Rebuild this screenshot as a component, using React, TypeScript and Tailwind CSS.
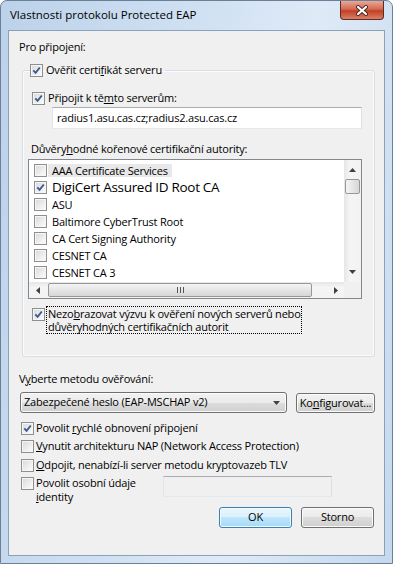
import React from 'react';

const font = "font-['Open_Sans',sans-serif]";

function Check({ checked }: { checked?: boolean }) {
  return (
    <span className="flex h-[13px] w-[13px] shrink-0 items-center justify-center border border-[#8e8f8f] bg-[linear-gradient(135deg,#d8d8d8,#fefefe)] shadow-[inset_0_0_0_1px_#f6f6f6]">
      {checked && (
        <svg width="9" height="9" viewBox="0 0 9 9">
          <path d="M1.3 4.4 L3.6 6.9 L7.8 1.5" fill="none" stroke="#3d5b8f" strokeWidth="1.9" />
        </svg>
      )}
    </span>
  );
}

function Arrow({ dir }: { dir: 'up' | 'down' | 'left' | 'right' }) {
  const paths = {
    up: 'M0 4 L3.5 0 L7 4 Z',
    down: 'M0 0 L7 0 L3.5 4 Z',
    left: 'M4 0 L4 7 L0 3.5 Z',
    right: 'M0 0 L4 3.5 L0 7 Z',
  };
  const vertical = dir === 'up' || dir === 'down';
  return (
    <svg width={vertical ? 7 : 4} height={vertical ? 4 : 7} viewBox={vertical ? '0 0 7 4' : '0 0 4 7'}>
      <path d={paths[dir]} fill="#404040" />
    </svg>
  );
}

function Button({ children, primary, className = '' }: { children: React.ReactNode; primary?: boolean; className?: string }) {
  return (
    <div
      className={`flex items-center justify-center rounded-[3px] border ${
        primary
          ? 'border-[#3c7fb1] bg-[linear-gradient(to_bottom,#eaf6fd,#d9f0fc_50%,#bee6fd_50%,#a7d9f5)] shadow-[inset_0_0_0_1px_#f0faff]'
          : 'border-[#707070] bg-[linear-gradient(to_bottom,#f2f2f2,#ebebeb_50%,#dddddd_50%,#cfcfcf)] shadow-[inset_0_0_0_1px_#fbfbfb]'
      } ${className}`}
    >
      {children}
    </div>
  );
}

const certs = [
  'AAA Certificate Services',
  'DigiCert Assured ID Root CA',
  'ASU',
  'Baltimore CyberTrust Root',
  'CA Cert Signing Authority',
  'CESNET CA',
  'CESNET CA 3',
];

function CertList() {
  return (
    <div className="ml-[5px] mt-[2px] flex h-[140px] w-[334px] flex-col border border-[#828790] bg-white">
      <div className="flex h-[122px]">
        <div className="flex-1 overflow-hidden pl-[5px] pt-[2px]">
          {certs.map((c, i) => (
            <div key={c} className="flex h-[17px] items-center gap-[1px]">
              <Check checked={i === 1} />
              <span
                className={`whitespace-nowrap px-[4px] ${
                  i === 1 ? 'text-[13.5px] leading-[17px] tracking-[-0.3px]' : 'leading-[13px]'
                } ${i === 0 ? 'bg-[#e8e8e8]' : ''}`}
              >
                {c}
              </span>
            </div>
          ))}
        </div>
        <div className="flex w-[17px] flex-col bg-[linear-gradient(to_right,#e6e6e6,#f5f5f5_35%,#f2f2f2)]">
          <div className="flex h-[17px] items-center justify-center pt-[2px]">
            <Arrow dir="up" />
          </div>
          <div className="mx-[1px] mt-[2px] h-[15px] rounded-[2px] border border-[#979797] bg-[linear-gradient(to_right,#f4f4f4,#e6e6e6_50%,#d6d6d6)]" />
          <div className="flex-1" />
          <div className="flex h-[17px] items-center justify-center pb-[3px]">
            <Arrow dir="down" />
          </div>
        </div>
      </div>
      <div className="flex h-[16px]">
        <div className="flex flex-1 items-center bg-[linear-gradient(to_bottom,#e6e6e6,#f5f5f5_35%,#f2f2f2)]">
          <div className="flex w-[17px] items-center justify-center">
            <Arrow dir="left" />
          </div>
          <div className="ml-[2px] flex h-[14px] w-[264px] items-center justify-center rounded-[2px] border border-[#979797] bg-[linear-gradient(to_bottom,#f4f4f4,#e6e6e6_50%,#d6d6d6)]">
            <svg width="7" height="6" viewBox="0 0 7 6">
              <path d="M0.5 0 V6 M3.5 0 V6 M6.5 0 V6" stroke="#555" strokeWidth="1" />
            </svg>
          </div>
          <div className="flex-1" />
          <div className="flex w-[17px] items-center justify-center">
            <Arrow dir="right" />
          </div>
        </div>
        <div className="w-[17px] bg-[#f0f0f0]" />
      </div>
    </div>
  );
}

export default function App() {
  return (
    <div
      className={`${font} flex h-[564px] w-[393px] flex-col overflow-hidden rounded-t-[7px] border border-[#6b7f97] bg-[linear-gradient(100deg,#bcd2ea_0%,#cfe0f2_40%,#dfeaf7_65%,#c4d9ee_100%)] text-[11px] tracking-[-0.2px] text-black`}
    >
      <div className="flex h-[29px] shrink-0 items-start">
        <span className="pl-[9px] pt-[6px] text-[11.5px] leading-[16px] tracking-normal">
          Vlastnosti protokolu Protected EAP
        </span>
        <div className="ml-auto mr-[8px] flex h-[19px] w-[44px] items-center justify-center rounded-b-[4px] border border-t-0 border-[#5a2c24] bg-[linear-gradient(to_bottom,#e9a897,#d46a52_45%,#c43f22_55%,#d9806a)]">
          <svg width="14" height="11" viewBox="0 0 14 11">
            <path d="M3 2 L11 9 M11 2 L3 9" stroke="#4a2520" strokeWidth="4" strokeLinecap="round" />
            <path d="M3 2 L11 9 M11 2 L3 9" stroke="#ffffff" strokeWidth="2.2" strokeLinecap="round" />
          </svg>
        </div>
      </div>

      <div className="mx-[7px] flex h-[526px] shrink-0 flex-col border border-[#8aa0bb] bg-[#f0f0f0]">
        <div className="ml-[10px] mt-[8px] leading-[16px]">Pro připojení:</div>

        <fieldset className="ml-[13px] mt-[7px] w-[353px] rounded-[3px] border border-[#d5dfe5] px-0 pb-[22px] shadow-[inset_0_0_0_1px_#fbfbfb]">
          <legend className="ml-[7px] flex h-[16px] items-center gap-[3px] pr-[3px]">
            <Check checked />
            <span className="leading-[16px]">
              Ověřit certi<u>f</u>ikát serveru
            </span>
          </legend>

          <div className="ml-[9px] mt-[12px] flex h-[16px] items-center gap-[3px]">
            <Check checked />
            <span>
              Připojit k tě<u>m</u>to serverům:
            </span>
          </div>
          <div className="ml-[29px] mt-[1px] flex h-[22px] w-[310px] items-center border border-[#abadb3] border-b-[#e3e9ef] border-l-[#e2e3ea] border-r-[#dbdfe6] bg-white pl-[4px]">
            radius1.asu.cas.cz;radius2.asu.cas.cz
          </div>

          <div className="ml-[8px] mt-[12px] leading-[16px]">
            Důvěry<u>h</u>odné kořenové certifikační autority:
          </div>
          <CertList />

          <div className="ml-[9px] mt-[7px] flex items-start gap-[1px]">
            <span className="mt-[2px]">
              <Check checked />
            </span>
            <span className="w-[256px] whitespace-nowrap border border-dotted border-black px-[1px] leading-[13px]">
              Nezo<u>b</u>razovat výzvu k ověření nových serverů nebo
              <br />
              důvěryhodných certifikačních autorit
            </span>
          </div>
        </fieldset>

        <div className="ml-[10px] mt-[14px] leading-[16px]">
          V<u>y</u>berte metodu ověřování:
        </div>
        <div className="ml-[11px] mt-[5px] flex items-start gap-[9px]">
          <Button className="h-[21px] w-[267px] !justify-between pl-[3px] pr-[6px]">
            <span>Zabezpečené heslo (EAP-MSCHAP v2)</span>
            <Arrow dir="down" />
          </Button>
          <Button className="mt-[1px] h-[20px] w-[79px]">
            <span>
              Ko<u>n</u>figurovat...
            </span>
          </Button>
        </div>

        <div className="ml-[12px] mt-[8px] flex h-[15px] items-center gap-[2px]">
          <Check checked />
          <span>
            Povolit <u>r</u>ychlé obnovení připojení
          </span>
        </div>
        <div className="ml-[12px] mt-[3px] flex h-[15px] items-center gap-[2px]">
          <Check />
          <span>
            <u>V</u>ynutit architekturu NAP (Network Access Protection)
          </span>
        </div>
        <div className="ml-[12px] mt-[4px] flex h-[15px] items-center gap-[2px]">
          <Check />
          <span>
            <u>O</u>dpojit, nenabízí-li server metodu kryptovazeb TLV
          </span>
        </div>
        <div className="ml-[12px] mt-[3px] flex items-start">
          <span className="mt-[1px]">
            <Check />
          </span>
          <span className="ml-[2px] w-[127px] leading-[14px]">
            Povolit osobní údaje
            <br />
            <u>i</u>dentity
          </span>
          <div className="h-[21px] w-[169px] border border-[#abadb3] border-b-[#e3e9ef] border-l-[#e2e3ea] border-r-[#dbdfe6] bg-[#f0f0f0]" />
        </div>

        <div className="mr-[10px] mt-[3px] flex justify-end gap-[9px]">
          <Button primary className="h-[21px] w-[73px]">
            OK
          </Button>
          <Button className="h-[21px] w-[73px]">Storno</Button>
        </div>
      </div>
    </div>
  );
}
